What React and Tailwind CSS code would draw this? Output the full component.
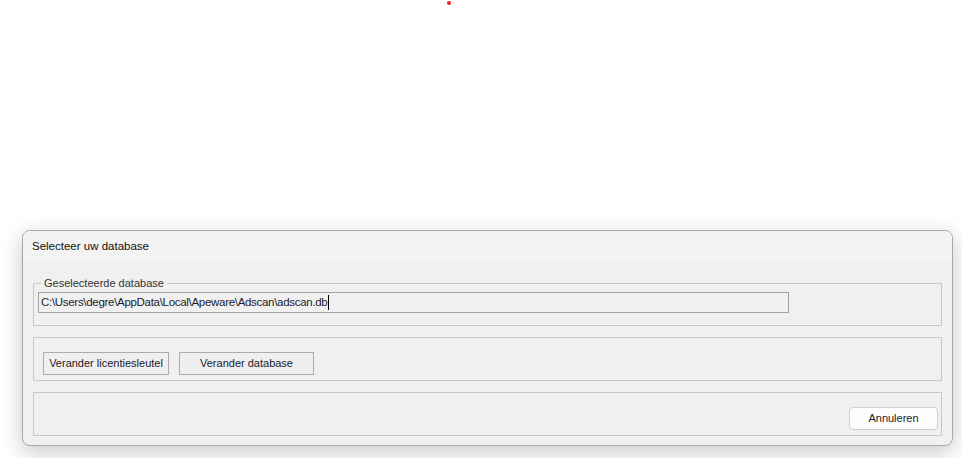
export default function App() {
  const font = { fontFamily: '"Liberation Sans", Arial, sans-serif' };
  return (
    <div className="relative w-[962px] h-[458px] bg-white overflow-hidden" style={font}>
      <div className="absolute left-[447px] top-[1px] w-[4px] h-[4px] rounded-full bg-[#e8262b]" />
      <div className="pt-[230px] pl-[22px]">
        <div className="w-[931px] h-[216px] rounded-[8px] border border-[#a9a9a9] bg-[#f0f0f0] overflow-hidden shadow-[0_6px_22px_rgba(0,0,0,0.22)] flex flex-col">
          <div className="h-[31px] bg-[#f3f3f3] flex items-center pl-[9px] text-[11.5px] text-[#111]">
            Selecteer uw database
          </div>
          <div className="flex flex-col pl-[10px] pt-[21px] gap-[11px]">
            <div className="relative w-[909px] h-[43px] border border-[#c9c9c9]">
              <span className="absolute left-[7px] top-[-9px] px-[3px] bg-[#f0f0f0] text-[11px] leading-[16px] text-[#333] whitespace-nowrap">
                Geselecteerde database
              </span>
              <div className="ml-[4px] mt-[8px] w-[751px] h-[21px] border border-[#a3a3a3] bg-[#f0f0f0] flex items-center pl-[2px] text-[11.5px] tracking-[-0.3px] text-[#1c1c2c] whitespace-nowrap">
                <span>C:\Users\degre\AppData\Local\Apeware\Adscan\adscan.db</span>
                <span className="ml-[1px] w-[1px] h-[15px] bg-black" />
              </div>
            </div>
            <div className="w-[909px] h-[44px] border border-[#c9c9c9] flex items-start pt-[14px] pl-[9px] gap-[10px]">
              <div className="w-[126px] h-[23px] border border-[#adadad] bg-[#efefef] flex items-center justify-center text-[11px] text-[#1a1a2a] whitespace-nowrap">
                Verander licentiesleutel
              </div>
              <div className="w-[135px] h-[23px] border border-[#adadad] bg-[#efefef] flex items-center justify-center text-[11px] text-[#1a1a2a] whitespace-nowrap">
                Verander database
              </div>
            </div>
            <div className="w-[909px] h-[44px] border border-[#c9c9c9] flex items-start justify-end pr-[3px] pt-[14px]">
              <div className="w-[89px] h-[23px] rounded-[4px] border border-[#d0d0d0] bg-[#fdfdfd] flex items-center justify-center text-[11px] text-[#1a1a2a] whitespace-nowrap">
                Annuleren
              </div>
            </div>
          </div>
        </div>
      </div>
    </div>
  );
}
